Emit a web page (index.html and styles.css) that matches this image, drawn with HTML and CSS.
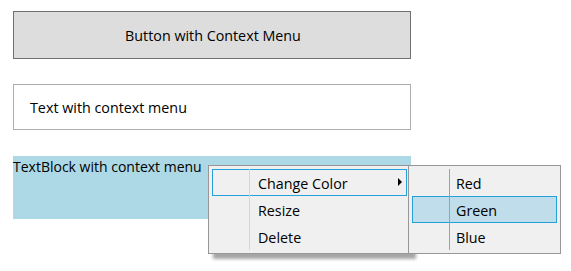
FILE: index.html
```html
<!DOCTYPE html>
<html lang="en">
<head>
    <meta charset="UTF-8">
    <title>Context Menu</title>
    <link rel="stylesheet" href="styles.css">
</head>
<body>
    <div class="page">
        <button class="btn">Button with Context Menu</button>
        <div class="textbox">Text with context menu</div>
        <div class="textblock">TextBlock with context menu</div>
    </div>

    <div class="menu menu-main">
        <div class="item item-focus">
            <span class="label">Change Color</span>
            <span class="arrow"></span>
        </div>
        <div class="item"><span class="label">Resize</span></div>
        <div class="item"><span class="label">Delete</span></div>
    </div>

    <div class="menu menu-sub">
        <div class="item"><span class="label">Red</span></div>
        <div class="item item-hover"><span class="label">Green</span></div>
        <div class="item"><span class="label">Blue</span></div>
    </div>
</body>
</html>
```

FILE: styles.css
```css
* {
    box-sizing: border-box;
}

body {
    margin: 0;
    background: #fff;
    color: #000;
    font-family: "Open Sans", "Noto Sans", sans-serif;
    font-size: 14.3px;
    position: relative;
    width: 571px;
    height: 271px;
    overflow: hidden;
}

.page {
    display: flex;
    flex-direction: column;
    width: 398px;
    margin: 11px 0 0 13px;
}

.btn {
    height: 48px;
    border: 1px solid #707070;
    background: #dddddd;
    font: inherit;
    color: inherit;
    padding: 0 0 0 2px;
    margin-bottom: 25px;
}

.textbox {
    height: 46px;
    border: 1px solid #abadb3;
    padding: 1px 0 0 16px;
    display: flex;
    align-items: center;
    margin-bottom: 26px;
}

.textblock {
    height: 63px;
    background: #add8e6;
    font-size: 14px;
    line-height: 21px;
}

/* context menus */
.menu {
    position: absolute;
    top: 165px;
    height: 89px;
    background: #f0f0f0;
    border: 1px solid #979797;
    padding: 3px;
}

.menu::before {
    content: "";
    position: absolute;
    left: 40px;
    top: 3px;
    bottom: 3px;
    width: 1px;
    background: #d7d7d7;
    z-index: 1;
}

.menu-main {
    left: 208px;
    width: 203px;
    box-shadow: 5px 5px 3px rgba(0, 0, 0, 0.35);
}

.menu-sub {
    left: 408px;
    width: 153px;
}

.menu-sub::before {
    background: #a0a0a0;
}

.item {
    height: 27px;
    display: flex;
    align-items: center;
    padding: 2px 0 0 45px;
    border: 1px solid transparent;
    position: relative;
}

.menu-sub .item {
    padding-left: 43px;
}

.item-focus {
    border-color: #26a0da;
}

.item-hover {
    border-color: #26a0da;
    background: #bfddea;
}

.arrow {
    position: absolute;
    right: 4px;
    top: 8px;
    border-left: 4px solid #000;
    border-top: 4px solid transparent;
    border-bottom: 4px solid transparent;
}
```
